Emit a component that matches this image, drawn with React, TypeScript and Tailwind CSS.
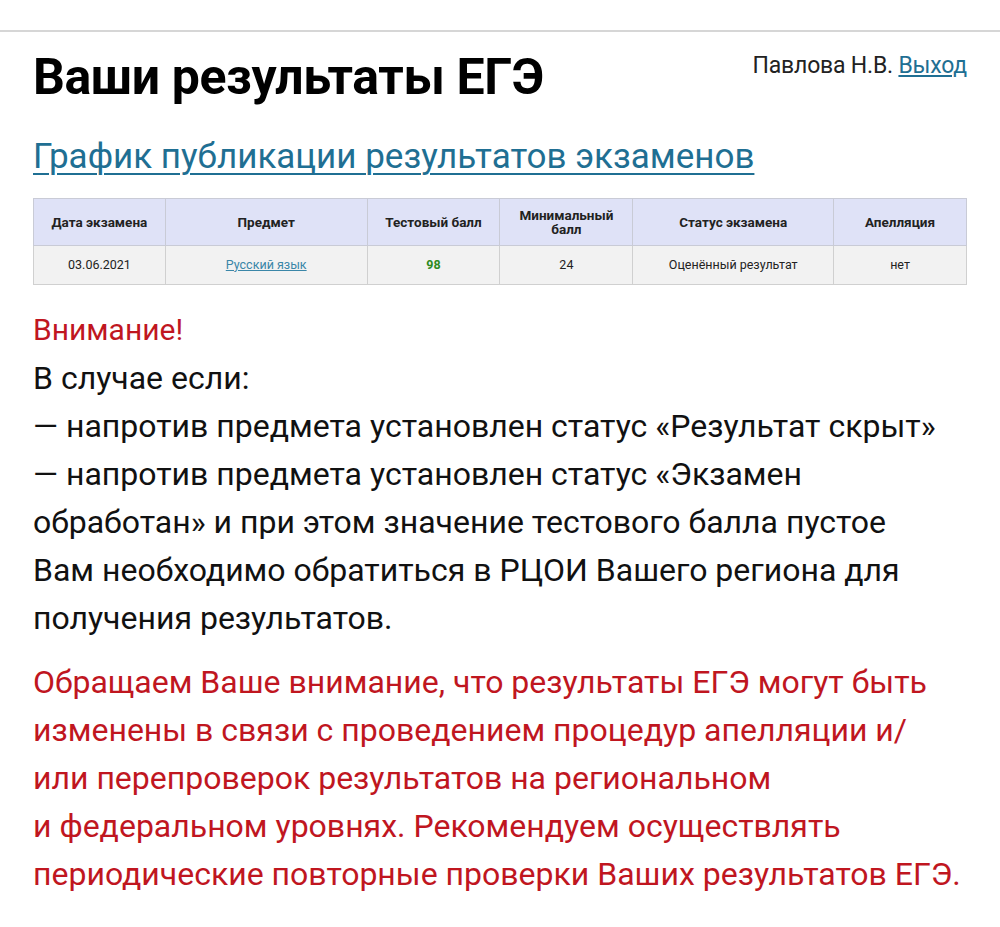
export default function App() {
  const cols = [
    { w: "w-[132px]", head: "Дата экзамена" },
    { w: "w-[202px]", head: "Предмет" },
    { w: "w-[133px]", head: "Тестовый балл" },
    { w: "w-[133px]", head: "Минимальный балл" },
    { w: "w-[201px]", head: "Статус экзамена" },
    { w: "w-[133px]", head: "Апелляция" },
  ];

  return (
    <div className="min-h-[927px] w-[1000px] bg-white font-['Roboto',sans-serif] text-[#111]">
      <div className="h-[30px]" />
      <div className="h-[2px] bg-[#d6d6d6]" />

      <div className="px-[33px]">
        {/* Header */}
        <div className="flex items-start justify-between pt-[10px]">
          <h1 className="text-[50px] font-bold leading-[70px] tracking-[-0.4px] text-black">Ваши результаты ЕГЭ</h1>
          <div className="pt-[11px] text-[23px] leading-[26px] tracking-[-0.2px] text-[#222]">
            Павлова Н.В.{" "}
            <a href="#" className="text-[#1f6f93] underline underline-offset-2">
              Выход
            </a>
          </div>
        </div>

        <a
          href="#"
          className="mt-[23px] block text-[35px] leading-[44px] text-[#1f6f93] underline decoration-2 underline-offset-[5px]"
        >
          График публикации результатов экзаменов
        </a>

        {/* Results table */}
        <table className="mt-[19px] w-[934px] border-collapse text-[12.5px]">
          <thead>
            <tr className="h-[47px] bg-[#dfe2f7]">
              {cols.map((c) => (
                <th
                  key={c.head}
                  className={`${c.w} border border-[#c9cbd6] px-2 text-center text-[13.5px] font-bold leading-[14px] text-[#222]`}
                >
                  {c.head === "Минимальный балл" ? (
                    <>
                      Минимальный
                      <br />
                      балл
                    </>
                  ) : (
                    c.head
                  )}
                </th>
              ))}
            </tr>
          </thead>
          <tbody>
            <tr className="h-[39px] bg-[#f2f2f2] text-center text-[#222]">
              <td className="border border-[#d0d0d0]">03.06.2021</td>
              <td className="border border-[#d0d0d0]">
                <a href="#" className="text-[#3a86a8] underline">
                  Русский язык
                </a>
              </td>
              <td className="border border-[#d0d0d0] font-bold text-[#2e8b1e]">98</td>
              <td className="border border-[#d0d0d0]">24</td>
              <td className="border border-[#d0d0d0]">Оценённый результат</td>
              <td className="border border-[#d0d0d0]">нет</td>
            </tr>
          </tbody>
        </table>

        {/* Notice */}
        <div className="mt-[21px] text-[32px] leading-[48px]">
          <div className="text-[30px] text-[#c0161f]">Внимание!</div>
          <div>В случае если:</div>
          <div>— напротив предмета установлен статус «Результат скрыт»</div>
          <div>— напротив предмета установлен статус «Экзамен</div>
          <div>обработан» и при этом значение тестового балла пустое</div>
          <div>Вам необходимо обратиться в РЦОИ Вашего региона для</div>
          <div>получения результатов.</div>
        </div>

        <div className="mt-[16px] text-[32px] leading-[48px] text-[#c0161f]">
          <div>Обращаем Ваше внимание, что результаты ЕГЭ могут быть</div>
          <div>изменены в связи с проведением процедур апелляции и/</div>
          <div>или перепроверок результатов на региональном</div>
          <div>и федеральном уровнях. Рекомендуем осуществлять</div>
          <div>периодические повторные проверки Ваших результатов ЕГЭ.</div>
        </div>
      </div>
    </div>
  );
}
